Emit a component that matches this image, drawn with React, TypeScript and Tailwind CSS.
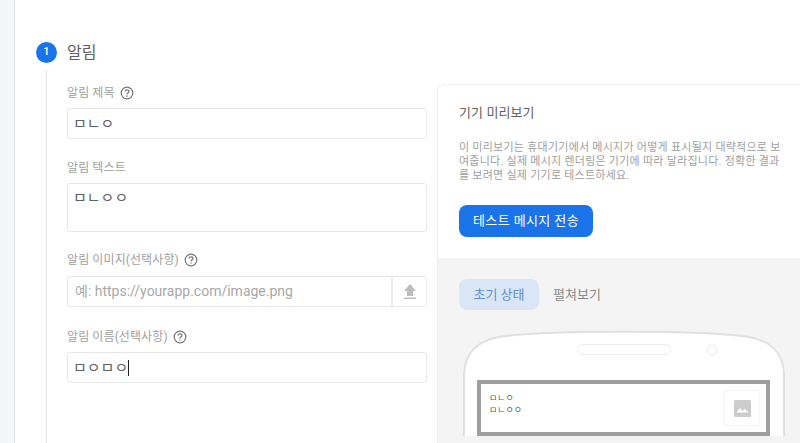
const KR = "font-['Roboto','Noto_Sans_CJK_KR',sans-serif]";

function HelpIcon() {
  return (
    <svg width="14" height="14" viewBox="0 0 14 14" fill="none" className="ml-[5px] shrink-0">
      <circle cx="7" cy="7" r="5.8" stroke="#757575" strokeWidth="1.2" />
      <path d="M5 5.6c0-1.1.9-1.8 2-1.8s2 .7 2 1.7c0 1.3-2 1.4-2 2.9" stroke="#757575" strokeWidth="1.2" />
      <rect x="6.4" y="9.5" width="1.2" height="1.2" fill="#757575" />
    </svg>
  );
}

function Label({ text, help }: { text: string; help?: boolean }) {
  return (
    <div className="flex items-center h-[16px] text-[12px] text-[#a0a0a0] tracking-[0.1px]">
      {text}
      {help && <HelpIcon />}
    </div>
  );
}

function Box({ children, tall }: { children: React.ReactNode; tall?: boolean }) {
  return (
    <div
      className={`mt-[7px] w-[360px] rounded-[3px] border border-[#e8e8e8] bg-white pl-[5px] text-[15px] text-[#616161] ${
        tall ? "h-[49px] pt-[3px]" : "h-[31px] pt-px flex items-center"
      }`}
    >
      {children}
    </div>
  );
}

function Phone() {
  return (
    <div className="relative mt-[20px] ml-[25px] h-[106px] w-[322px] overflow-hidden">
      <svg width="322" height="106" viewBox="0 0 322 106" fill="none" className="absolute left-0 top-0">
        <path
          d="M1 107V46C1 24 14 11 36 7C80 0 242 0 286 7C308 11 321 24 321 46V107Z"
          fill="#fff"
          stroke="#e0e0e0"
          strokeWidth="2"
        />
        <rect x="114.5" y="14.5" width="93" height="10" rx="5" stroke="#eeeeee" />
        <circle cx="249" cy="20.5" r="4.8" stroke="#e8e8e8" />
      </svg>
      <div className="absolute left-[14px] top-[50px] h-[56px] w-[293px] border-4 border-[#9e9e9e] bg-white pl-[8px] pt-[8px] text-[9px] leading-[12px] text-[#616161]">
        <div>ㅁㄴㅇ</div>
        <div>ㅁㄴㅇㅇ</div>
        <div className="absolute right-[6px] top-[6px] flex h-[36px] w-[36px] items-center justify-center border border-[#f5f5f5]">
          <svg width="17" height="17" viewBox="0 0 17 17">
            <rect width="17" height="17" rx="1.5" fill="#cccccc" />
            <path d="M2.5 12.5 6 8l2.6 3 2-2.2 3.9 3.7Z" fill="#fff" />
          </svg>
        </div>
      </div>
    </div>
  );
}

export default function App() {
  return (
    <div className={`flex h-[443px] w-[800px] overflow-hidden bg-white ${KR}`}>
      <div className="w-[15px] shrink-0 border-r border-[#e4e4e4] bg-[#f4f5f7]" />
      <div className="flex-1">
        <div className="ml-[21px] mt-[42px] flex h-[21px] items-center">
          <div className="flex h-[21px] w-[21px] items-center justify-center rounded-full bg-[#1a73e8] text-[11px] font-medium text-white">
            1
          </div>
          <div className="ml-[10px] text-[16px] text-[#616161]">알림</div>
        </div>
        <div className="ml-[31px] mt-[7px] flex h-[373px] gap-[10px] border-l border-[#e4e4e4] pl-[20px]">
          <div className="w-[360px] shrink-0 pt-[15px]">
            <Label text="알림 제목" help />
            <Box>ㅁㄴㅇ</Box>
            <div className="mt-[21px]">
              <Label text="알림 텍스트" />
            </div>
            <Box tall>ㅁㄴㅇㅇ</Box>
            <div className="mt-[20px]">
              <Label text="알림 이미지(선택사항)" help />
            </div>
            <div className="mt-[8px] flex h-[31px] w-[360px] rounded-[3px] border border-[#e8e8e8] bg-white">
              <div className="flex-1 pl-[7px] text-[14px] leading-[29px] text-[#a8a8a8]">예: https://yourapp.com/image.png</div>
              <div className="flex w-[35px] items-center justify-center border-l-2 border-[#eeeeee]">
                <svg width="14" height="15" viewBox="0 0 14 15">
                  <path d="M7 0 1 7H4V12H10V7H13Z" fill="#bdbdbd" />
                  <rect x="1" y="13.5" width="12" height="1.5" fill="#bdbdbd" />
                </svg>
              </div>
            </div>
            <div className="mt-[22px]">
              <Label text="알림 이름(선택사항)" help />
            </div>
            <Box>
              ㅁㅇㅁㅇ
              <span className="inline-block h-[16px] w-px bg-[#212121]" />
            </Box>
          </div>
          <div className="mt-[14px] flex-1 rounded-tl-[8px] border-l border-t border-[#eeeeee]">
            <div className="h-[173px] pl-[21px] pt-[18px]">
              <div className="text-[13px] tracking-[0.1px] leading-[20px] text-[#616161]">기기 미리보기</div>
              <p className="mt-[18px] w-[330px] text-[11px] leading-[14px] tracking-[0.25px] text-[#a0a0a0]">
                이 미리보기는 휴대기기에서 메시지가 어떻게 표시될지 대략적으로 보여줍니다. 실제 메시지 렌더링은 기기에 따라 달라집니다. 정확한 결과를 보려면 실제 기기로 테스트하세요.
              </p>
              <div className="mt-[22px] flex h-[32px] w-[134px] items-center justify-center rounded-[8px] bg-[#1a73e8] text-[13px] tracking-[0.4px] text-white">
                테스트 메시지 전송
              </div>
            </div>
            <div className="h-[200px] bg-[#f4f4f4] pt-[21px]">
              <div className="ml-[21px] flex h-[31px] items-center text-[13px]">
                <div className="flex h-[31px] w-[80px] items-center justify-center rounded-[8px] bg-[#d9e6f6] text-[#5f8fd0]">초기 상태</div>
                <div className="ml-[14px] text-[#8a8a8a]">펼쳐보기</div>
              </div>
              <Phone />
            </div>
          </div>
        </div>
      </div>
    </div>
  );
}
